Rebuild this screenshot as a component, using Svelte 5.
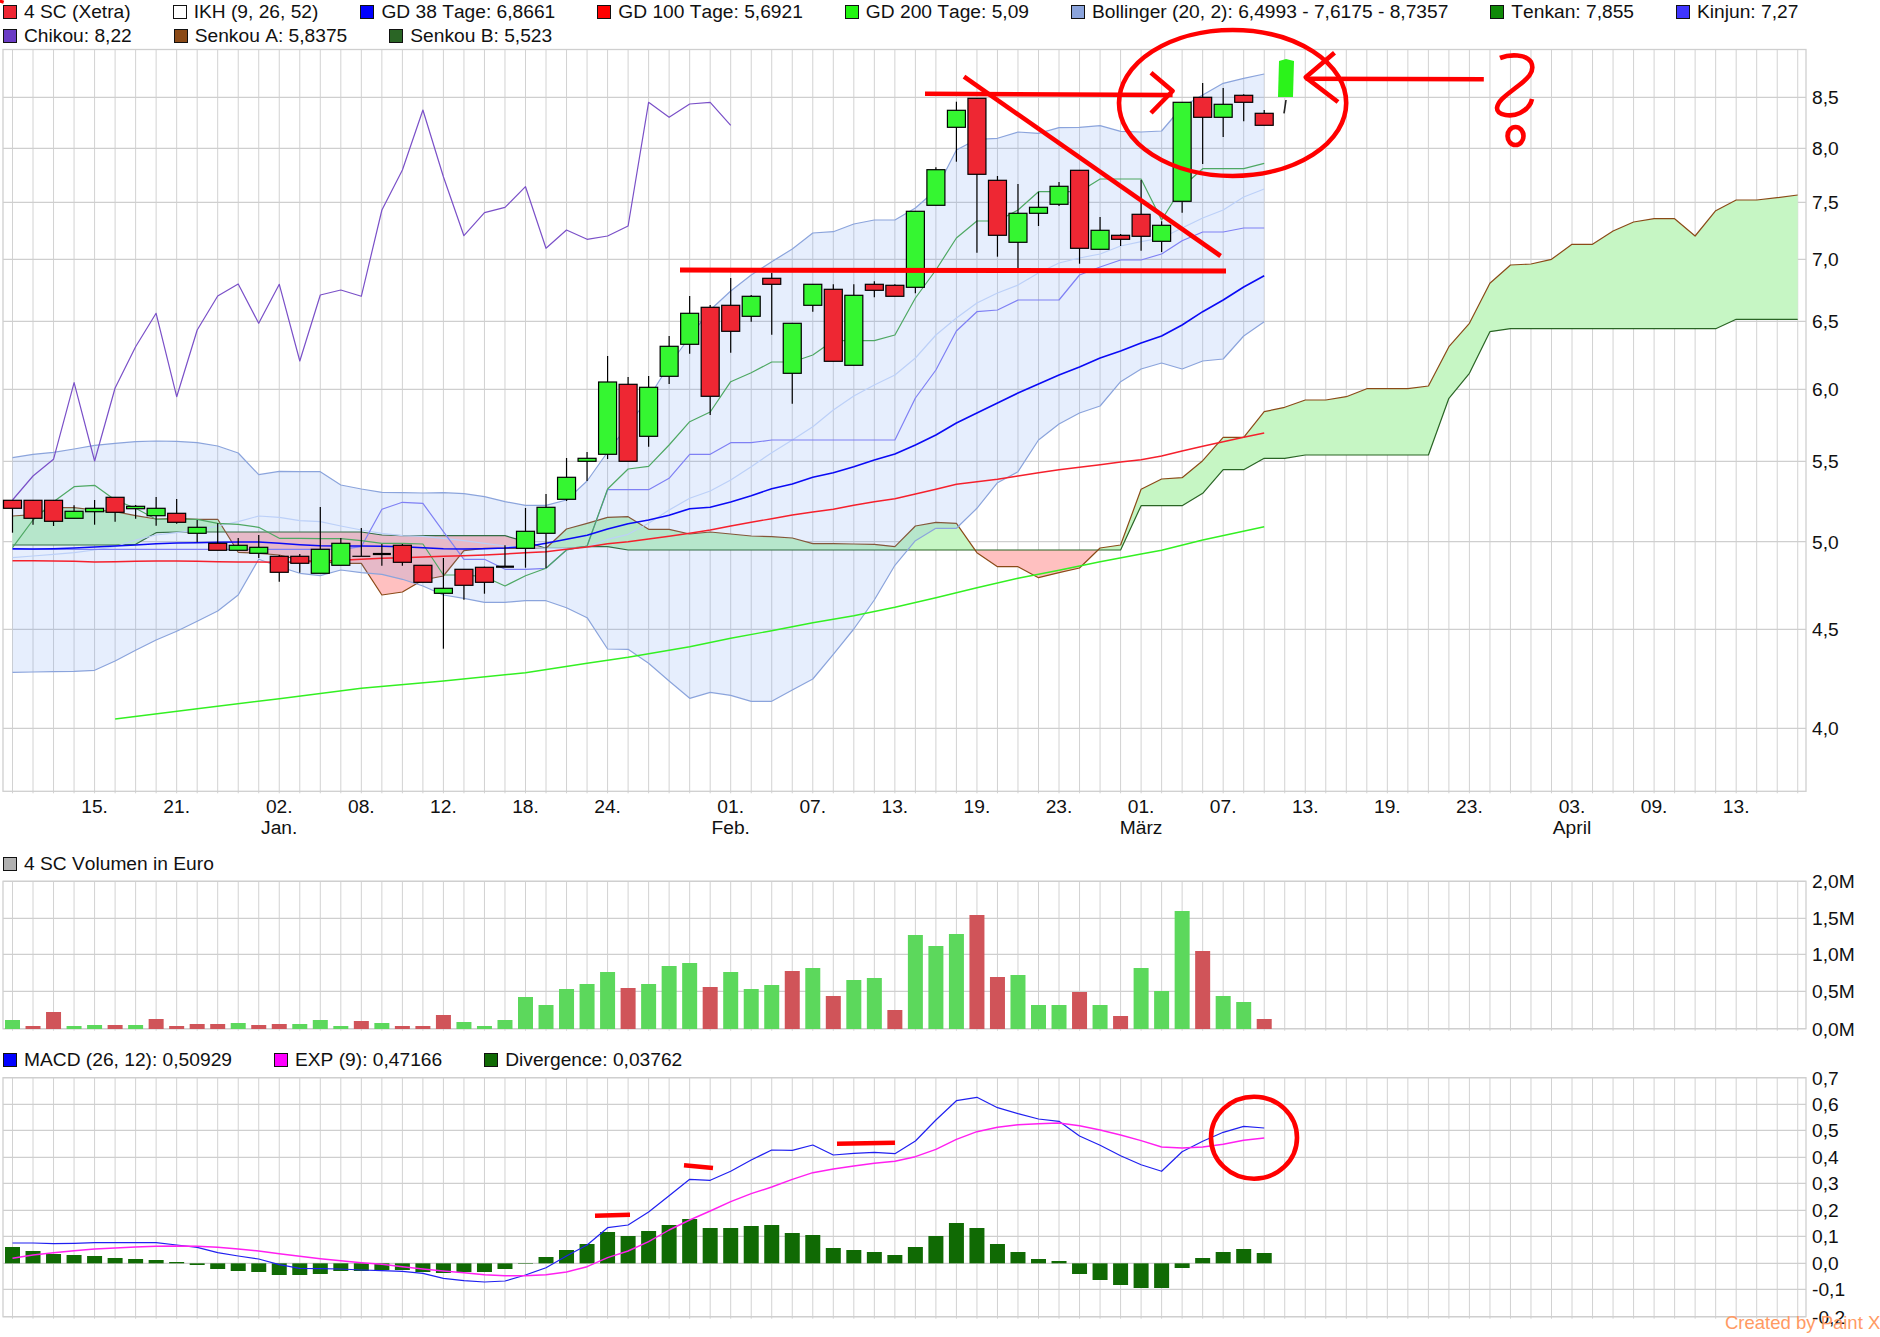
<script lang="ts">
	// Everything is traced in page pixels, so the three svg panels just use viewBoxes onto the page
	const dayCount: number = 88
	const dayX = (day: number): number => 12.5 + 20.52 * day
	const days: Array<number> = new Array(dayCount).fill(0).map((_, index: number) => index)

	// values were read off 3x crops: base + value / 3 gives the page y
	const trace = (base: number, values: Array<number>): Array<number> => values.map((value) => base + value / 3)

	const toPoints = (values: Array<number>, start: number = 0): string =>
		values.map((y: number, index: number) => `${dayX(index + start).toFixed(1)},${y.toFixed(1)}`).join(' ')

	const repeat = (value: number, times: number): Array<number> => new Array(times).fill(value)

	interface Legend {
		label: string
		color: string
	}

	const priceLegend: Array<Legend> = [
		{ label: '4 SC (Xetra)', color: '#ee2733' },
		{ label: 'IKH (9, 26, 52)', color: '#ffffff' },
		{ label: 'GD 38 Tage: 6,8661', color: '#0000ff' },
		{ label: 'GD 100 Tage: 5,6921', color: '#ff0000' },
		{ label: 'GD 200 Tage: 5,09', color: '#22f511' },
		{ label: 'Bollinger (20, 2): 6,4993 - 7,6175 - 8,7357', color: '#8ba4dc' },
		{ label: 'Tenkan: 7,855', color: '#108a08' },
		{ label: 'Kinjun: 7,27', color: '#3f35ff' },
		{ label: 'Chikou: 8,22', color: '#6b3cc5' },
		{ label: 'Senkou A: 5,8375', color: '#8b4a17' },
		{ label: 'Senkou B: 5,523', color: '#2a6525' }
	]
	const volumeLegend: Array<Legend> = [{ label: '4 SC Volumen in Euro', color: '#b0b0b0' }]
	const macdLegend: Array<Legend> = [
		{ label: 'MACD (26, 12): 0,50929', color: '#0000ff' },
		{ label: 'EXP (9): 0,47166', color: '#ff00ff' },
		{ label: 'Divergence: 0,03762', color: '#106a04' }
	]

	interface AxisLabel {
		text: string
		y: number
	}

	const priceAxis: Array<AxisLabel> = [
		{ text: '8,5', y: 97.3 },
		{ text: '8,0', y: 148.3 },
		{ text: '7,5', y: 202.3 },
		{ text: '7,0', y: 259.3 },
		{ text: '6,5', y: 321.3 },
		{ text: '6,0', y: 389.3 },
		{ text: '5,5', y: 461.3 },
		{ text: '5,0', y: 541.7 },
		{ text: '4,5', y: 629.3 },
		{ text: '4,0', y: 728.3 }
	]
	const volumeAxis: Array<AxisLabel> = [
		{ text: '2,0M', y: 881.3 },
		{ text: '1,5M', y: 918.3 },
		{ text: '1,0M', y: 954.3 },
		{ text: '0,5M', y: 991.3 },
		{ text: '0,0M', y: 1028.7 }
	]
	const macdAxis: Array<AxisLabel> = [
		{ text: '0,7', y: 1077.7 },
		{ text: '0,6', y: 1104.3 },
		{ text: '0,5', y: 1130.3 },
		{ text: '0,4', y: 1157.3 },
		{ text: '0,3', y: 1183.3 },
		{ text: '0,2', y: 1210.3 },
		{ text: '0,1', y: 1236.3 },
		{ text: '0,0', y: 1263.3 },
		{ text: '-0,1', y: 1289.3 },
		{ text: '-0,2', y: 1316.7 }
	]

	const dateLabels: Array<[number, string]> = [
		[4, '15.'], [8, '21.'], [13, '02.'], [17, '08.'], [21, '12.'], [25, '18.'], [29, '24.'],
		[35, '01.'], [39, '07.'], [43, '13.'], [47, '19.'], [51, '23.'], [55, '01.'], [59, '07.'],
		[63, '13.'], [67, '19.'], [71, '23.'], [76, '03.'], [80, '09.'], [84, '13.']
	]
	const monthLabels: Array<[number, string]> = [[13, 'Jan.'], [35, 'Feb.'], [55, 'März'], [76, 'April']]

	// [bodyTop, bodyBottom, wickTop, wickBottom, kind] kind: r red, g green, d doji, t thick doji
	type Candle = [number, number, number, number, string]
	const candles: Array<Candle> = [
		[500.3, 508.3, 500.3, 532.7, 'r'], [500.3, 518.3, 500.3, 524.7, 'r'], [500.3, 521.3, 500.3, 526, 'r'],
		[511.3, 518.3, 505.3, 518.3, 'g'], [508.3, 511.7, 500, 524.7, 'g'], [497.3, 512.3, 497.3, 521.7, 'r'],
		[506.3, 508.7, 505, 518.7, 'g'], [508.3, 515.7, 497, 525.7, 'g'], [513.3, 522.3, 499, 523.7, 'r'],
		[527.3, 533.3, 520, 542.3, 'g'], [543.3, 550.3, 523.3, 550.3, 'r'], [545.3, 550.3, 538, 550.3, 'g'],
		[547.3, 553.3, 535, 558, 'g'], [556.3, 572.3, 555, 581.7, 'r'], [556.3, 563.3, 554, 572.7, 'r'],
		[549.3, 573.3, 507, 573.3, 'g'], [543.3, 565.3, 538, 565.3, 'g'], [556.3, 556.3, 528, 556.3, 'd'],
		[554, 554, 544, 565.7, 't'], [545.3, 562.3, 544, 565.7, 'r'], [565.3, 582.3, 565.3, 582.3, 'r'],
		[588.3, 593.3, 558, 648.7, 'g'], [569.3, 585.3, 569.3, 599.7, 'r'], [567.3, 582.3, 566.7, 593.7, 'r'],
		[566.7, 566.7, 545.3, 566.7, 't'], [531.3, 548.3, 508, 567.7, 'g'], [507.3, 533.3, 494, 568, 'g'],
		[477.3, 499.3, 458, 501, 'g'], [458.3, 461.3, 452, 481, 'g'], [382, 454.3, 356, 459, 'g'],
		[384.3, 461.3, 377, 461.3, 'r'], [387.3, 436.3, 376, 446.7, 'g'], [346.3, 376.3, 336, 384, 'g'],
		[313.3, 344.3, 296, 353.7, 'g'], [307.3, 396.3, 305, 415, 'r'], [305.3, 331.3, 278, 352.7, 'r'],
		[296.3, 316.3, 295, 321.7, 'g'], [278.3, 284.3, 272.7, 334.7, 'r'], [323.3, 373.3, 323.3, 403.7, 'g'],
		[284.3, 305.3, 284.3, 311.7, 'g'], [289.3, 361.3, 284.3, 361.3, 'r'], [295.3, 365.3, 284.3, 365.3, 'g'],
		[284.3, 290.3, 281.3, 297.3, 'r'], [285.3, 296.3, 284.3, 296.3, 'r'], [211.3, 287.3, 211.3, 293.3, 'g'],
		[169.7, 205.3, 167.3, 205.3, 'g'], [110.3, 127.3, 101.7, 161.7, 'g'], [98.3, 174.3, 98.3, 252.7, 'r'],
		[180.3, 235.3, 176, 256.7, 'r'], [213.3, 242.3, 184, 268.3, 'g'], [207.3, 213.3, 191.7, 226, 'g'],
		[186.3, 204.3, 182, 206, 'g'], [170.3, 248.3, 170.3, 263.7, 'r'], [230.3, 249.3, 217, 249.3, 'g'],
		[235.3, 239.3, 234, 246, 'r'], [214.3, 236.3, 180, 250.7, 'r'], [225.3, 241.3, 221.3, 252, 'g'],
		[102.3, 201.3, 102.3, 212.7, 'g'], [97.3, 117.3, 83, 164, 'r'], [104.3, 117.3, 88, 137, 'g'],
		[95.3, 102.3, 94.3, 121.3, 'r'], [113.3, 125.3, 110, 125.3, 'r']
	]

	const bollUpper: Array<number> = [
		...trace(420, [113, 103, 97, 87, 76, 70, 65, 63, 64, 68, 78, 99, 164, 154, 155, 155, 195, 207, 217, 218, 219, 218, 221, 230, 245, 256, 256, 240, 183]),
		452, 425, 398, 365, 337, 310, 291, 275, 261.7, 249, 233, 231.7, 224, 220, 220, 208, 190, 150, 139.3, 138.3, 132,
		133.3, 127.7, 127.3, 125.7, 131.3, 132, 131, 107, 95, 83.3, 78.3, 74
	]
	const bollLower: Array<number> = [
		...trace(420, [757, 756, 755, 754, 751, 723, 691, 660, 634, 604, 573, 525, 418, 440, 460, 467, 450, 458, 463, 478, 498, 525, 535, 547, 547, 542, 542, 563, 593, 687, 688, 730, 783, 835]),
		...trace(420, [817, 826, 844, 844, 810, 777, 703, 627, 540, 436, 362, 325, 325, 265, 188, 155, 60, 12]),
		413, 406, 381.7, 369, 363, 369, 361, 359, 336, 321.7
	]
	const bollMiddle: Array<number> = [
		...trace(420, [413, 408, 403, 398, 390, 380, 360, 345, 338, 330, 318, 305, 288, 292, 302, 305, 318, 330, 340, 347, 349, 355, 362, 370, 378, 383, 385, 385, 382, 358, 343, 310, 270, 235, 213, 180, 140, 98, 60, 20]),
		410, 396, 385, 375, 358, 335, 318, 303, 293, 285, 273, 263, 258, 254, 246, 241.7, 238, 228, 218, 210, 197, 189
	]
	const bandArea: string = `${toPoints(bollUpper)} ${bollLower.map((y: number, index: number) => `${dayX(index).toFixed(1)},${y.toFixed(1)}`).reverse().join(' ')}`

	const kinjun: Array<number> = [
		...trace(420, [...repeat(388, 17), 380, 268, 247, 250, 335, 418, 418, 448, 448, 445, 390, 378, 209, 209, 209, 175, 103, 103, 68, 68, 60, 60, 60, 60, 60, 60, 60]),
		398, 370, 331, 311.7, 310, 300, 300, 300, 275, 267, 260, 260, 254, 240.7, 232, 232, 228, 228
	]
	const tenkan: Array<number> = [
		...trace(420, [383, 300, 245, 200, 196, 240, 265, 298, 297, 298, 310, 313, 322, 355, 355, 356, 356, 362, 370, 370, 372, 465, 465, 470, 498, 467, 445, 390, 378, 207, 147, 139, 75, 5]),
		412, 381.7, 372.7, 362, 362, 355, 340.7, 340.7, 340.7, 335, 298, 270, 238, 221, 221, 210, 191.7, 191.7, 191.7,
		179, 179, 179, 220, 187, 168.7, 168.7, 168.7, 163.3
	]
	const chikou: Array<number> = [
		500, 476, 459.3, 382.7, 461, 388, 346.7, 313.3, 396.7, 330, 296, 284, 323.3, 284.3, 361, 295, 290, 296.3, 210,
		170, 110, 176.7, 235.7, 212.7, 207.3, 186.7, 248.3, 230, 239.3, 236, 226, 102.3, 117.3, 104, 102.3, 125.3
	]
	const senkouA: Array<number> = [
		...trace(420, [288, 284, 263, 263, 270, 275, 287, 297, 295, 298, 298, 397, 400, 405, 420, 425, 430, 430, 525, 516, 480, 468, 392, 385, 385, 385, 385, 327, 310, 292, 290, 328, 328, 342]),
		...trace(420, [336, 342, 348, 350, 354, 371, 371, 372, 373, 380, 318, 307, 310, 398, 440, 440, 473, 458, 444, 384, 375, 208, 177, 173, 122, 52, 52]),
		...trace(0, [1235, 1222, 1200, 1200, 1190, 1166, 1166, 1166, 1158, 1040, 970, 850, 795, 792, 778, 733, 733, 693, 666, 656, 656, 708, 632, 600, 600, 593, 585])
	]
	const senkouB: Array<number> = [
		...trace(420, [...repeat(375, 6), 373, 338, ...repeat(336, 10), 345, ...repeat(347, 6), 365, 385, 385, 380, 380, ...repeat(390, 25), 257, 257, 257, 220, 149, 149]),
		458.3, 458.3, ...repeat(455, 7), 398.3, 373.3, 331.7, ...repeat(328.7, 11), ...repeat(319.3, 4)
	]

	const gd38: Array<number> = [
		...trace(420, [386, 387, 386, 384, 381, 378, 375, 371, 369, 368, 367, 366, 366, 370, 374, 377, 378, 378, 379, 380, 383, 386, 387, 386, 384, 380, 370, 358, 346, 327, 311, 300, 286, 266, 262, 246, 227, 206, 192, 172, 158, 140, 120, 102, 75, 45]),
		423, 413, 403, 393, 384, 375, 367, 358, 351, 343, 336, 325, 311.7, 300, 287, 275.7
	]
	const gd100: Array<number> = trace(420, [
		422, 422.5, 423, 424, 426, 425, 424, 423, 423, 424, 425, 426, 426, 427, 426, 424, 421, 418, 415, 413, 411, 409,
		407, 405, 402, 398, 395, 388, 381, 371, 365, 357, 349, 340, 330, 318, 307, 296, 285, 276, 268, 256, 245, 236,
		222, 208, 193, 185, 178, 168, 158, 149, 142, 134, 126, 119, 108, 93, 79, 65, 52, 39
	])
	// sparse, this one is nearly straight
	const gd200: string = (
		[[5, 897], [9, 866], [13, 836], [17, 805], [21, 783], [25, 758], [28, 730], [30, 712], [33, 680], [35, 655], [37, 632], [39, 608], [41, 587], [43, 562], [45, 533], [47, 503], [49, 475], [51, 451], [53, 425], [55, 402], [56, 391], [58, 360], [61, 320]] as Array<[number, number]>
	)
		.map(([day, z]) => `${dayX(day).toFixed(1)},${(420 + z / 3).toFixed(1)}`)
		.join(' ')

	interface CloudRun {
		rising: boolean
		points: string
	}

	// splits the cloud where A and B cross so that each stretch gets its own colour
	function buildCloud(a: Array<number>, b: Array<number>): Array<CloudRun> {
		const runs: Array<CloudRun> = []
		let top: Array<string> = []
		let bottom: Array<string> = []
		let rising: boolean = a[0] <= b[0]

		const close = () => {
			runs.push({ rising, points: `${top.join(' ')} ${bottom.reverse().join(' ')}` })
			top = []
			bottom = []
		}

		a.forEach((value: number, index: number) => {
			const x = dayX(index)
			if (index > 0 && value <= b[index] !== rising) {
				const before = a[index - 1] - b[index - 1]
				const after = value - b[index]
				const t = before / (before - after)
				const crossX = dayX(index - 1) + t * 20.52
				const crossY = a[index - 1] + t * (value - a[index - 1])
				top.push(`${crossX},${crossY}`)
				bottom.push(`${crossX},${crossY}`)
				close()
				rising = !rising
				top.push(`${crossX},${crossY}`)
				bottom.push(`${crossX},${crossY}`)
			}
			top.push(`${x},${value}`)
			bottom.push(`${x},${b[index]}`)
		})
		close()
		return runs
	}

	const cloud: Array<CloudRun> = buildCloud(senkouA, senkouB)

	const volumeTops: Array<number> = trace(840, [
		540, 558, 516, 558, 555, 555, 555, 537, 558, 552, 552, 549, 555, 552, 552, 540, 558, 543, 549, 558, 558, 525,
		546, 558, 540, 471, 495, 447, 432, 396, 444, 432, 378, 369, 441, 396, 447, 435, 393, 384, 468, 420, 414, 510,
		285, 318, 282, 225, 411, 405, 495, 495, 456, 495, 528, 384, 453, 213, 333, 468, 486, 537
	])
	const redVolumeDays: Array<number> = [1, 2, 5, 7, 8, 9, 10, 12, 13, 17, 19, 20, 21, 30, 34, 38, 40, 43, 47, 48, 52, 54, 58, 61]

	const divergence: Array<number> = trace(840, [
		1221, 1233, 1242, 1245, 1248, 1254, 1257, 1260, 1266, 1275, 1287, 1293, 1296, 1305, 1305, 1302, 1293, 1293, 1290,
		1290, 1296, 1299, 1296, 1296, 1287, 1269, 1251, 1230, 1212, 1176, 1188, 1173, 1155, 1137, 1164, 1164, 1158, 1155,
		1179, 1185, 1224, 1230, 1236, 1245, 1221, 1188, 1149, 1164, 1212, 1236, 1257, 1263, 1302, 1320, 1335, 1344, 1344,
		1284, 1254, 1236, 1227, 1239
	])
	const macdZero: number = 840 + 1270 / 3

	const macdLine: Array<number> = trace(840, [
		1209, 1209, 1211, 1210, 1208, 1208, 1208, 1208, 1215, 1222, 1238, 1248, 1257, 1274, 1285, 1286, 1287, 1290, 1292,
		1294, 1300, 1315, 1322, 1326, 1323, 1305, 1283, 1248, 1215, 1163, 1155, 1116, 1067, 1018, 1021, 994, 960, 930,
		931, 915, 945, 940, 937, 941, 903, 840, 782, 772, 803, 821, 837, 844, 888, 916, 947, 974, 994, 935, 904, 877, 859, 864
	])
	const expLine: Array<number> = trace(840, [
		1255, 1245, 1238, 1232, 1227, 1224, 1221, 1219, 1218, 1219, 1222, 1227, 1233, 1241, 1249, 1256, 1262, 1268, 1273,
		1280, 1287, 1293, 1298, 1304, 1307, 1307, 1304, 1296, 1280, 1253, 1233, 1205, 1170, 1140, 1113, 1085, 1061, 1041,
		1018, 998, 987, 978, 970, 964, 950, 928, 898, 875, 862, 854, 851, 849, 857, 870, 885, 902, 921, 924, 921, 913, 901, 894
	])
</script>

{#snippet grid(top: number, bottom: number, labels: Array<AxisLabel>)}
	{#each days as day}
		<line class="gridDay" x1={dayX(day)} x2={dayX(day)} y1={top} y2={bottom + 2} />
	{/each}
	{#each labels as label}
		<line class="gridValue" x1="3" x2="1806" y1={label.y} y2={label.y} />
		<text class="axis" x="1812" y={label.y + 7}>{label.text}</text>
	{/each}
	<rect class="frame" x="3" y={top} width="1803" height={bottom - top} />
{/snippet}

{#snippet legend(items: Array<Legend>)}
	<div class="legend">
		{#each items as item}
			<div class="legendItem">
				<span class="swatch" style:background-color={item.color}></span>
				{item.label}
			</div>
		{/each}
	</div>
{/snippet}

<main class="page">
	{@render legend(priceLegend)}
	<svg class="panel" width="1880" height="804" viewBox="0 48 1880 804">
		{@render grid(49.5, 791.3, priceAxis)}

		{#each dateLabels as [day, text]}
			<text class="date" x={dayX(day)} y="812.5">{text}</text>
		{/each}
		{#each monthLabels as [day, text]}
			<text class="date" x={dayX(day)} y="834">{text}</text>
		{/each}

		{#each cloud as run}
			<polygon class={run.rising ? 'cloudUp' : 'cloudDown'} points={run.points} />
		{/each}
		<polyline class="line senkouB" points={toPoints(senkouB)} />
		<polyline class="line senkouA" points={toPoints(senkouA)} />

		<polygon class="band" points={bandArea} />
		<polyline class="line bollMiddle" points={toPoints(bollMiddle)} />
		<polyline class="line bollEdge" points={toPoints(bollUpper)} />
		<polyline class="line bollEdge" points={toPoints(bollLower)} />

		<polyline class="line kinjun" points={toPoints(kinjun)} />
		<polyline class="line tenkan" points={toPoints(tenkan)} />
		<polyline class="line chikou" points={toPoints(chikou)} />
		<polyline class="line gd200" points={gd200} />
		<polyline class="line gd100" points={toPoints(gd100)} />
		<polyline class="line gd38" points={toPoints(gd38)} />

		{#each candles as [bodyTop, bodyBottom, wickTop, wickBottom, kind], day}
			<line class="wick" x1={dayX(day)} x2={dayX(day)} y1={wickTop} y2={wickBottom} />
			{#if kind === 'r' || kind === 'g'}
				<rect
					class={kind === 'r' ? 'body red' : 'body green'}
					x={dayX(day) - 9}
					y={bodyTop}
					width="18"
					height={bodyBottom - bodyTop}
				/>
			{:else}
				<line
					class={kind === 't' ? 'doji thick' : 'doji'}
					x1={dayX(day) - 9}
					x2={dayX(day) + 9}
					y1={bodyTop}
					y2={bodyTop}
				/>
			{/if}
		{/each}

		<!-- hand drawn marks on top of the chart -->
		<line class="pen" x1="2" y1="0" x2="1" y2="3" />
		<ellipse class="pen" cx="1232.6" cy="103" rx="113.6" ry="73" />
		<polyline class="pen" points="925,93.7 1172.6,95" />
		<polyline class="pen" points="1151,72.7 1172.6,91 1151,113" />
		<polyline class="pen" points="964,76.7 1220.6,256" />
		<polyline class="pen thick" points="680,270 1226,271" />
		<polyline class="pen" points="1483.8,79.3 1305.7,78.7" />
		<polyline class="pen" points="1334.5,52.7 1305.7,77.3 1338,102" />
		<path
			class="pen"
			d="M1500 58 C1510 54 1526 54 1531 62 C1536 72 1526 80 1518 86 C1508 94 1498 100 1497 108 C1497 116 1512 117 1520 113 C1528 109 1531 104 1532 99"
		/>
		<ellipse class="pen" cx="1515.5" cy="136" rx="8" ry="9" />
		<polygon class="penGreen" points="1279,61 1286,59 1294,61 1293,97 1278,97" />
		<line class="penDark" x1="1286" y1="100" x2="1284" y2="113.3" />
	</svg>

	{@render legend(volumeLegend)}
	<svg class="panel" width="1880" height="172" viewBox="0 876 1880 172">
		{@render grid(881.3, 1028.7, volumeAxis)}
		{#each volumeTops as top, day}
			<rect
				class={redVolumeDays.includes(day) ? 'volume red' : 'volume green'}
				x={dayX(day) - 7.5}
				y={top}
				width="15"
				height={1029 - top}
			/>
		{/each}
	</svg>

	{@render legend(macdLegend)}
	<svg class="panel" width="1880" height="265" viewBox="0 1072 1880 265">
		{@render grid(1077.7, 1316.7, macdAxis)}
		{#each divergence as y, day}
			<rect
				class="divergence"
				x={dayX(day) - 7.5}
				y={Math.min(y, macdZero)}
				width="15"
				height={Math.max(Math.abs(y - macdZero), 0.5)}
			/>
		{/each}
		<polyline class="line macd" points={toPoints(macdLine)} />
		<polyline class="line exp" points={toPoints(expLine)} />

		<polyline class="pen" points="595,1215.7 630,1214.7" />
		<polyline class="pen" points="684,1165.3 713,1168" />
		<polyline class="pen" points="837,1143.7 895,1142.7" />
		<ellipse class="pen" cx="1254" cy="1137.7" rx="43" ry="41" />

		<text class="watermark" x="1725" y="1328.5">Created by Paint X</text>
	</svg>
</main>

<style>
	:global(body) {
		background-color: #ffffff;
	}

	.page {
		width: 1880px;
		height: 1337px;
		overflow: hidden;
		font-family: 'Liberation Sans', Arial, sans-serif;
		font-kerning: none;
		color: #111111;
	}

	.legend {
		display: flex;
		flex-wrap: wrap;
		column-gap: 42px;
		padding-left: 3px;
		font-size: 19.2px;
	}

	.legendItem {
		height: 24px;
		display: flex;
		align-items: center;
		gap: 7px;
		white-space: nowrap;
	}

	.swatch {
		width: 14px;
		height: 14px;
		box-sizing: border-box;
		border: 1px solid #111111;
	}

	.panel {
		display: block;
		overflow: visible;
	}

	.panel text {
		font-family: 'Liberation Sans', Arial, sans-serif;
		font-size: 19.2px;
		fill: #111111;
	}

	.panel .date {
		text-anchor: middle;
	}

	.panel .watermark {
		fill: #ff9a63;
		font-size: 18.5px;
	}

	.gridDay {
		stroke: #d2d2d2;
		stroke-width: 1;
	}

	.gridValue {
		stroke: #cfcfcf;
		stroke-width: 1.3;
	}

	.frame {
		fill: none;
		stroke: #cfcfcf;
		stroke-width: 1.3;
	}

	.line {
		fill: none;
		stroke-width: 1.2;
		stroke-linejoin: round;
	}

	.cloudUp {
		fill: #c6f6c4;
	}

	.cloudDown {
		fill: #ffc0c0;
	}

	.senkouA {
		stroke: #8b4a17;
	}

	.senkouB {
		stroke: #2a6525;
	}

	.band {
		fill: rgba(100, 150, 240, 0.16);
	}

	.bollMiddle {
		stroke: #bcd0f8;
	}

	.bollEdge {
		stroke: #8ba4dc;
	}

	.kinjun {
		stroke: #7f80f4;
	}

	.tenkan {
		stroke: #4ea863;
	}

	.chikou {
		stroke: #7a50c8;
	}

	.gd200 {
		stroke: #33f022;
		stroke-width: 1.4;
	}

	.gd100 {
		stroke: #f5202c;
		stroke-width: 1.4;
	}

	.gd38 {
		stroke: #0a0af5;
		stroke-width: 1.6;
	}

	.wick {
		stroke: #000000;
		stroke-width: 1.2;
	}

	.body {
		stroke: #000000;
		stroke-width: 1.2;
	}

	.body.red {
		fill: #ee2733;
	}

	.body.green {
		fill: #35f631;
	}

	.doji {
		stroke: #000000;
		stroke-width: 1.2;
	}

	.doji.thick {
		stroke-width: 2.2;
	}

	.pen {
		fill: none;
		stroke: #ff0000;
		stroke-width: 4.6;
		stroke-linejoin: round;
	}

	.pen.thick {
		stroke-width: 5;
	}

	.penGreen {
		fill: #2bf31a;
	}

	.penDark {
		stroke: #222222;
		stroke-width: 1.6;
	}

	.volume.red {
		fill: #d05459;
	}

	.volume.green {
		fill: #5cd85c;
	}

	.divergence {
		fill: #106a04;
	}

	.macd {
		stroke: #2020f0;
	}

	.exp {
		stroke: #ff20f0;
		stroke-width: 1.4;
	}
</style>
